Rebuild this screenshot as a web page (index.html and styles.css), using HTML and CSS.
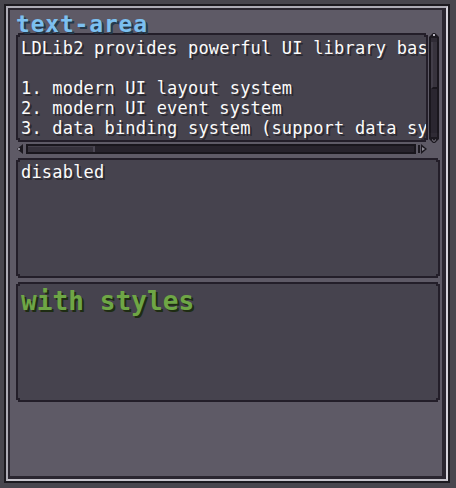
FILE: index.html
```html
<!DOCTYPE html>
<html>
<head>
<meta charset="utf-8">
<link rel="stylesheet" href="styles.css">
</head>
<body>
<div class="frame">
  <div class="frame-light">
    <div class="frame-dark">
      <div class="panel">
        <div class="title">text-area</div>
        <div class="area-grid">
          <div class="box box-main">
            <div class="box-inner">
              <div class="text">LDLib2 provides powerful UI library based on modern concepts.

1. modern UI layout system
2. modern UI event system
3. data binding system (support data sync between client and server)</div>
            </div>
          </div>
          <div class="vscroll">
            <svg class="vcap" width="12" height="9" viewBox="0 0 12 9">
              <polygon points="5,0 7,0 11,4 11,9 1,9 1,4" fill="#1c1920"/>
              <rect x="5" y="1" width="2" height="2" fill="#b9b6c1"/>
              <rect x="3" y="5" width="6" height="4" fill="#2f2b35"/>
            </svg>
            <div class="vtrack"><div class="vthumb"></div></div>
            <svg class="vcap" width="12" height="11" viewBox="0 0 12 11">
              <polygon points="1,0 11,0 11,6 7,10 5,10 1,6" fill="#1c1920"/>
              <rect x="3" y="0" width="6" height="4" fill="#2f2b35"/>
              <polygon points="4,6 6,8 8,6 8,7 6,9 4,7" fill="#8e8b96"/>
            </svg>
          </div>
          <div class="hscroll">
            <svg class="harrow" width="8" height="10" viewBox="0 0 8 10">
              <polygon points="1,5 7,0 7,10" fill="#1c1920"/>
              <rect x="2" y="4" width="2" height="2" fill="#8e8b96"/>
            </svg>
            <div class="htrack"><div class="hthumb"></div></div>
            <svg class="harrow" width="10" height="10" viewBox="0 0 10 10">
              <rect x="0" y="1" width="2" height="8" fill="#1c1920"/>
              <polygon points="3,0 9,5 3,10" fill="#1c1920"/>
              <polygon points="4,3 7,5 4,7" fill="#8e8b96"/>
            </svg>
          </div>
        </div>
        <div class="box box-plain">
          <div class="box-inner">
            <div class="text">disabled</div>
          </div>
        </div>
        <div class="box box-plain">
          <div class="box-inner">
            <div class="text green">with styles</div>
          </div>
        </div>
      </div>
    </div>
  </div>
</div>
</body>
</html>
```
FILE: styles.css
```css
html, body {
  margin: 0;
  padding: 0;
  background: #48464e;
  width: 456px;
  height: 488px;
  overflow: hidden;
}

.frame {
  margin: 4px 0 0 4px;
  width: 446px;
  height: 479px;
  box-sizing: border-box;
  border: 2px solid #1c1a20;
  display: flex;
}

.frame-light {
  flex: 1;
  display: flex;
  border: 2px solid #aeacb6;
  border-right-color: #d6d4dc;
  border-bottom-color: #c6c4cc;
}

.frame-dark {
  flex: 1;
  display: flex;
  border: 2px solid #2a2630;
  border-right-width: 4px;
  border-bottom-width: 3px;
}

.panel {
  flex: 1;
  background: #5e5a66;
  padding: 6px 2px 0 6px;
  display: flex;
  flex-direction: column;
  font-family: "DejaVu Sans Mono", "Liberation Mono", monospace;
}

.title {
  height: 17px;
  line-height: 17px;
  font-size: 23px;
  font-weight: bold;
  letter-spacing: 0.8px;
  color: #7cc0f0;
  text-shadow: 2px 2px 0 #24384a;
  white-space: pre;
  position: relative;
  z-index: 1;
}

.area-grid {
  display: grid;
  grid-template-columns: 412px 12px;
  grid-template-rows: 111px 10px;
}

.box {
  --notch: polygon(2px 0, calc(100% - 2px) 0, calc(100% - 2px) 2px, 100% 2px, 100% calc(100% - 2px), calc(100% - 2px) calc(100% - 2px), calc(100% - 2px) 100%, 2px 100%, 2px calc(100% - 2px), 0 calc(100% - 2px), 0 2px, 2px 2px);
  background: #231e29;
  padding: 2px;
  box-sizing: border-box;
  clip-path: var(--notch);
  display: flex;
}

.box-inner {
  flex: 1;
  background: #46434e;
  clip-path: var(--notch);
  overflow: hidden;
  padding: 2px 3px 0 3px;
}

.box-main {
  height: 109px;
  grid-column: 1;
  grid-row: 1;
}

.box-main .box-inner {
  padding-top: 3px;
}

.box-plain {
  height: 120px;
  margin-top: 4px;
}

.text {
  white-space: pre;
  font-size: 17px;
  line-height: 20px;
  letter-spacing: 0.2px;
  color: #fbfbfb;
  text-shadow: 2px 2px 0 #2b2930;
}

.text.green {
  font-size: 26px;
  font-weight: bold;
  line-height: 30px;
  letter-spacing: 0.1px;
  color: #6ea646;
  text-shadow: 2px 2px 0 #1e2c13;
}

.vscroll {
  grid-column: 2;
  grid-row: 1;
  display: flex;
  flex-direction: column;
  width: 12px;
  height: 111px;
}

.vcap {
  display: block;
  flex: none;
}

.vtrack {
  flex: 1;
  margin: 0 1px;
  border: 2px solid #19161d;
  border-top: 0;
  border-bottom: 0;
  background: #2a2630;
  display: flex;
  flex-direction: column;
}

.vthumb {
  height: 45px;
  background: #37333d;
  border-left: 2px solid #423e49;
  border-bottom: 2px solid #19161d;
}

.hscroll {
  grid-column: 1;
  grid-row: 2;
  display: flex;
  align-items: center;
  gap: 2px;
  height: 10px;
}

.harrow {
  display: block;
  flex: none;
}

.htrack {
  flex: 1;
  height: 10px;
  box-sizing: border-box;
  border: 2px solid #19161d;
  background: #27232c;
  display: flex;
}

.hthumb {
  width: 65px;
  background: #36323c;
  border-top: 1px solid #44404b;
  border-right: 2px solid #4c4855;
}
```
